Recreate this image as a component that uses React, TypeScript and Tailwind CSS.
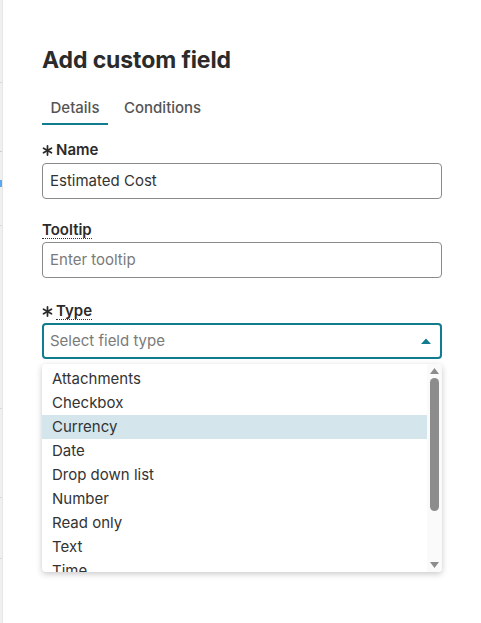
import { useState } from "react";

const types = ["Attachments", "Checkbox", "Currency", "Date", "Drop down list", "Number", "Read only", "Text", "Time"];

function Asterisk() {
  return (
    <svg width="11" height="11" viewBox="0 0 10 10" className="mr-[3px] mt-[1px]">
      <g stroke="#2b2b2b" strokeWidth="1.6" strokeLinecap="round">
        <line x1="5" y1="0.8" x2="5" y2="9.2" />
        <line x1="1.4" y1="2.9" x2="8.6" y2="7.1" />
        <line x1="1.4" y1="7.1" x2="8.6" y2="2.9" />
      </g>
    </svg>
  );
}

export default function App() {
  const [hovered] = useState("Currency");
  return (
    <div className="flex w-[481px] h-[623px] bg-white font-['Inter',sans-serif] text-[#2b2b2b] overflow-hidden">
      {/* page behind the side panel */}
      <div className="w-[2px] bg-[#f0f0f0] flex flex-col">
        <div className="h-[82px]" />
        <div className="h-px bg-[#d9d9d9]" />
        <div className="h-[68px]" />
        <div className="h-px bg-[#cfcfcf]" />
        <div className="h-[28px]" />
        <div className="h-[7px] bg-[#5aa9f0]" />
        <div className="h-[38px]" />
        <div className="h-px bg-[#d9d9d9]" />
        <div className="h-[182px]" />
        <div className="h-px bg-[#d9d9d9]" />
        <div className="h-[88px]" />
        <div className="h-px bg-[#d9d9d9]" />
        <div className="h-[60px]" />
        <div className="h-px bg-[#d9d9d9]" />
      </div>
      <div className="flex-1 border-l border-[#e6e6e6] pl-[39px] pr-[39px] pt-[46px]">
        <h1 className="text-[23px] leading-[28px] font-bold tracking-[-0.1px] text-[#2b2b2b]">Add custom field</h1>

        <div className="mt-[24px] flex items-start gap-[16px] text-[15px] text-[#555]">
          <div className="w-[66px] flex flex-col items-center">
            <span className="leading-[20px] font-medium">Details</span>
            <div className="mt-[5px] h-[2px] w-full bg-[#117b8f]" />
          </div>
          <div className="flex flex-col items-center">
            <span className="leading-[20px] font-medium">Conditions</span>
            <div className="mt-[5px] h-[2px] w-full bg-transparent" />
          </div>
        </div>

        <div className="mt-[15px] flex items-center text-[15px] font-semibold leading-[20px]">
          <Asterisk />
          <span>Name</span>
        </div>
        <div className="mt-[3px] h-[36px] rounded-[4px] border border-[#8a8a8a] flex items-center px-[7px] text-[15px] text-[#333]">
          Estimated Cost
        </div>

        <div className="mt-[22px] flex items-center text-[15px] font-semibold leading-[20px]">
          <span className="border-b border-dotted border-[#333] leading-[17px]">Tooltip</span>
        </div>
        <div className="mt-[3px] h-[36px] rounded-[4px] border border-[#8a8a8a] flex items-center px-[7px] text-[15px] text-[#7a7a7a]">
          Enter tooltip
        </div>

        <div className="mt-[24px] flex items-center text-[15px] font-semibold leading-[20px]">
          <Asterisk />
          <span className="border-b border-dotted border-[#333] leading-[17px]">Type</span>
        </div>
        <div className="mt-[3px] h-[36px] rounded-[4px] border-2 border-[#117b8f] flex items-center justify-between pl-[6px] pr-[9px] text-[15px] text-[#7a7a7a]">
          <span>Select field type</span>
          <svg width="10" height="6" viewBox="0 0 10 6">
            <path d="M0 6 L5 0.5 L10 6 Z" fill="#117b8f" />
          </svg>
        </div>

        <div className="mt-[5px] h-[208px] rounded-[4px] bg-white shadow-[0_2px_6px_rgba(0,0,0,0.22)] flex overflow-hidden">
          <div className="flex-1 pt-[3px] overflow-hidden">
            {types.map((t) => (
              <div
                key={t}
                className={`h-[24px] flex items-center pl-[10px] text-[15px] text-[#333] ${t === hovered ? "bg-[#d4e6ec]" : ""}`}
              >
                {t}
              </div>
            ))}
          </div>
          <div className="w-[15px] bg-[#fafafa] flex flex-col items-center pt-[4px] pb-[4px]">
            <svg width="9" height="6" viewBox="0 0 9 6">
              <path d="M0 6 L4.5 0 L9 6 Z" fill="#8c8c8c" />
            </svg>
            <div className="mt-[4px] w-[9px] h-[133px] rounded-full bg-[#8c8c8c]" />
            <div className="flex-1" />
            <svg width="9" height="6" viewBox="0 0 9 6">
              <path d="M0 0 L9 0 L4.5 6 Z" fill="#8c8c8c" />
            </svg>
          </div>
        </div>
      </div>
    </div>
  );
}
